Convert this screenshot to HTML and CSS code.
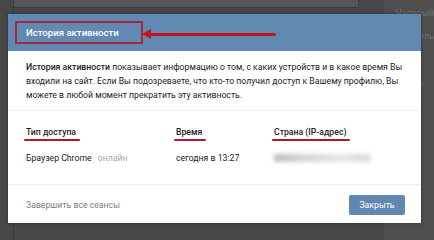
FILE: index.html
```html
<!DOCTYPE html>
<html>
<head>
  <title>История активности</title>
  <meta name="viewport" content="width=device-width, initial-scale=1.0">
  <link rel="stylesheet" href="styles.css">
</head>
<body>
  <div class="page">
    <div class="page-main">
      <div class="page-box"></div>
    </div>
    <div class="page-side">
      <p>Чаперый</p>
      <p>Профиль</p>
      <p>Стиль</p>
      <p>Жизнь</p>
    </div>
  </div>

  <div class="modal">
    <div class="modal-header">
      <span class="modal-title">История активности</span>
      <div class="mark-box"></div>
      <div class="mark-arrow"></div>
    </div>
    <div class="modal-text">
      <b>История активности</b> показывает информацию о том, с каких устройств и в какое время Вы входили на сайт. Если Вы подозреваете, что кто-то получил доступ к Вашему профилю, Вы можете в любой момент прекратить эту активность.
    </div>
    <div class="sessions">
      <div class="sessions-row sessions-head">
        <span class="marked">Тип доступа</span>
        <span class="marked">Время</span>
        <span class="marked">Страна (IP-адрес)</span>
      </div>
      <div class="sessions-row">
        <span>Браузер Chrome <span class="online">онлайн</span></span>
        <span>сегодня в 13:27</span>
        <span class="ip"><i class="ip-blur"></i></span>
      </div>
    </div>
    <div class="modal-footer">
      <span class="end-all">Завершить все сеансы</span>
      <button class="close-btn">Закрыть</button>
    </div>
  </div>
</body>
</html>
```

FILE: styles.css
```css
body {
  margin: 0;
  width: 434px;
  height: 240px;
  overflow: hidden;
  background-color: #474747;
  font-family: Roboto, "Open Sans", Arial, sans-serif;
}
.page {
  display: flex;
  height: 240px;
}
.page-main {
  width: 350px;
  margin-left: 13px;
  border-left: 1px solid #3c3c3c;
}
.page-box {
  height: 7px;
  background-color: #555555;
  border-bottom: 1px solid #3e3e3e;
  border-right: 1px solid #3e3e3e;
}
.page-side {
  margin-left: 25px;
  flex: 1;
  background-color: #4e4e4e;
  padding-top: 6px;
  padding-left: 12px;
}
.page-side p {
  margin: 0 0 9px 0;
  font-size: 9px;
  line-height: 14px;
  color: #6f6f6f;
  white-space: nowrap;
}

.modal {
  position: absolute;
  left: 8px;
  top: 14px;
  width: 413px;
  height: 209px;
  background-color: #ffffff;
  box-shadow: 0 0 3px rgba(0, 0, 0, 0.4);
}
.modal-header {
  position: relative;
  height: 37px;
  background-color: #6189b2;
  display: flex;
  align-items: center;
  padding-left: 18px;
}
.modal-title {
  color: #ffffff;
  font-size: 9.6px;
  font-weight: 500;
}
.mark-box {
  position: absolute;
  left: 7px;
  top: 7px;
  width: 124px;
  height: 19px;
  border: 2px solid #a22a3c;
}
.mark-arrow {
  position: absolute;
  left: 138px;
  top: 19px;
  width: 130px;
  height: 3px;
  background-color: #c4121f;
  border-radius: 2px;
}
.mark-arrow:before {
  content: "";
  position: absolute;
  left: -4px;
  top: -4px;
  border-top: 5.5px solid transparent;
  border-bottom: 5.5px solid transparent;
  border-right: 9px solid #c4121f;
}

.modal-text {
  padding: 9px 18px 8px 18px;
  font-size: 8.7px;
  line-height: 14px;
  color: #222222;
  border-bottom: 1px solid #eceef1;
}
.modal-text b {
  font-weight: 500;
}

.sessions {
  padding: 14px 18px 19px 18px;
  font-size: 8.7px;
  line-height: 14px;
  color: #222222;
}
.sessions-row {
  display: grid;
  grid-template-columns: 150px 98px 1fr;
}
.sessions-head {
  margin-bottom: 12px;
  font-weight: 500;
}
.marked {
  justify-self: start;
  position: relative;
}
.marked:after {
  content: "";
  position: absolute;
  left: -2px;
  right: -4px;
  bottom: -2px;
  height: 2px;
  background-color: #b3162a;
  border-radius: 1px;
}
.online {
  margin-left: 4px;
  color: #a3a3a3;
}
.ip {
  display: flex;
  align-items: center;
}
.ip-blur {
  display: block;
  width: 96px;
  height: 8px;
  background: linear-gradient(to right, #bdbdbd, #d4d4d4 30%, #e6e6e6 70%, #d8d8d8);
  filter: blur(2px);
}

.modal-footer {
  height: 40px;
  border-top: 1px solid #eceef1;
  display: flex;
  align-items: center;
  justify-content: space-between;
  padding: 0 16px 0 18px;
}
.end-all {
  font-size: 8.7px;
  color: #7a7e84;
}
.close-btn {
  width: 56px;
  height: 20px;
  padding: 0;
  border: none;
  border-radius: 2px;
  background-color: #6087b0;
  color: #ffffff;
  font-family: Roboto, "Open Sans", Arial, sans-serif;
  font-size: 8.7px;
}
```
